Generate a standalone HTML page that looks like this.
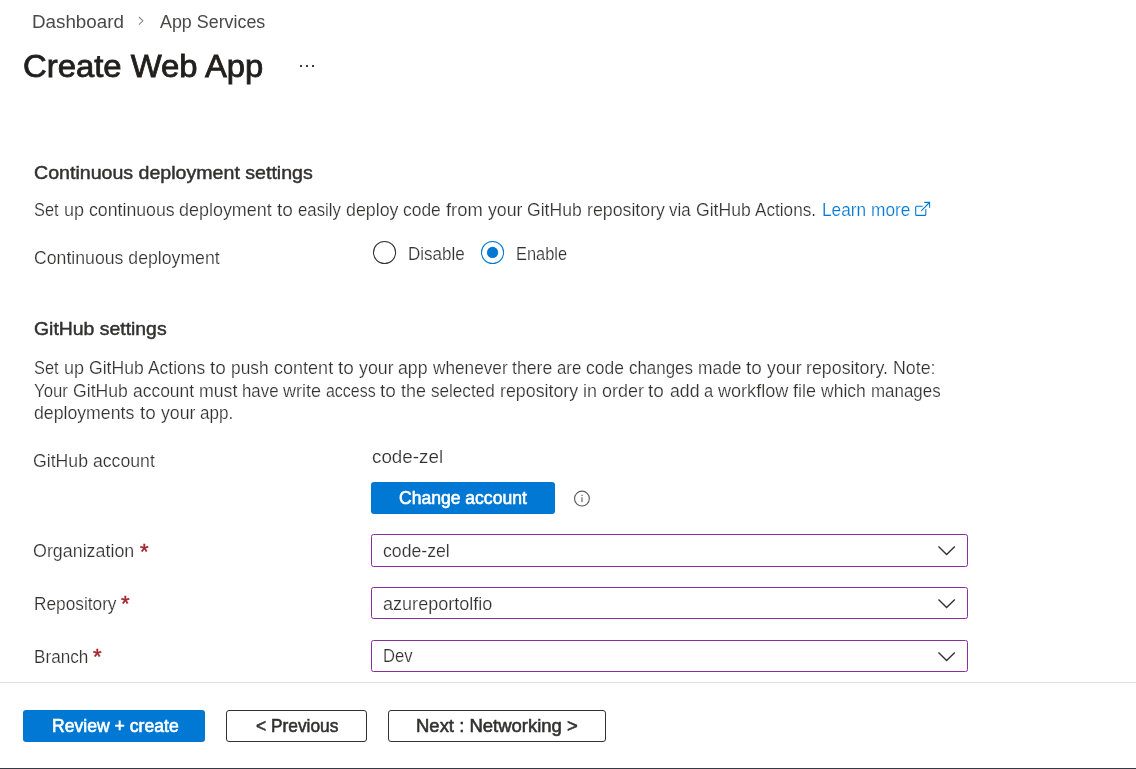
<!DOCTYPE html>
<html lang="en">
<head>
<meta charset="utf-8">
<title>Create Web App</title>
<style>
html,body{margin:0;padding:0;background:#fff;}
body{width:1136px;height:769px;position:relative;overflow:hidden;}
#page{position:absolute;left:0;top:0;width:1136px;height:769px;overflow:hidden;will-change:transform;font-family:"Liberation Sans",sans-serif;}
.t{position:absolute;white-space:nowrap;line-height:24px;height:24px;transform-origin:0 50%;}
.abs{position:absolute;box-sizing:border-box;}
.btn-p{background:#0078d4;border-radius:3px;}
.btn-s{background:#fff;border:1px solid #323130;border-radius:3px;}
.dd{left:371px;width:597px;border:1px solid #8a2da5;border-radius:2.5px;background:#fff;}
.radio{border-radius:50%;}
svg{position:absolute;overflow:visible;}
</style>
</head>
<body>
<div id="page">
<!-- breadcrumb chevron -->
<svg style="left:136px;top:14px" width="12" height="14" viewBox="0 0 12 14"><polyline points="3.0,3.0 6.9,6.8 3.0,10.6" fill="none" stroke="#8a8886" stroke-width="1.05"/></svg>
<!-- ellipsis -->
<div class="abs" style="left:300px;top:65px;width:2px;height:2px;background:#3b3a39"></div>
<div class="abs" style="left:306px;top:65px;width:2px;height:2px;background:#3b3a39"></div>
<div class="abs" style="left:312px;top:65px;width:2px;height:2px;background:#3b3a39"></div>

<!-- radios -->
<svg style="left:370px;top:238px" width="140" height="30" viewBox="0 0 140 30">
<circle cx="14.55" cy="14.45" r="11.05" fill="#fff" stroke="#323130" stroke-width="1.05"/>
<circle cx="122.55" cy="14.45" r="11.05" fill="#fff" stroke="#0078d4" stroke-width="1.05"/>
<circle cx="122.55" cy="14.45" r="5.6" fill="#0078d4"/>
</svg>

<!-- external link icon -->
<svg style="left:914px;top:201px" width="18" height="16" viewBox="0 0 18 16">
<path d="M8.8 5.3H2.7Q1.7 5.3 1.7 6.3V13.4Q1.7 14.4 2.7 14.4H10.8Q11.8 14.4 11.8 13.4V8.2" fill="none" stroke="#0078d4" stroke-width="1.1"/>
<path d="M7.2 9.8L15.5 1.5M10.2 1.4H15.6V6.8" fill="none" stroke="#0078d4" stroke-width="1.1"/>
</svg>

<!-- change account button -->
<div class="abs btn-p" style="left:371px;top:482px;width:184px;height:32px;"></div>
<!-- info icon -->
<svg style="left:573px;top:490px" width="18" height="18" viewBox="0 0 18 18">
<circle cx="8.95" cy="8.55" r="7.4" fill="none" stroke="#605e5c" stroke-width="1.15"/>
<rect x="8.45" y="7.2" width="1.1" height="4.9" fill="#605e5c"/>
<rect x="8.45" y="4.7" width="1.1" height="1.3" fill="#605e5c"/>
</svg>

<!-- dropdowns -->
<div class="abs dd" style="top:534px;height:33px"></div>
<div class="abs dd" style="top:587px;height:32px"></div>
<div class="abs dd" style="top:640px;height:32px"></div>
<svg style="left:936px;top:543px" width="22" height="14" viewBox="0 0 22 14"><polyline points="2.5,3.4 10.6,11.5 18.8,3.4" fill="none" stroke="#323130" stroke-width="1.35"/></svg>
<svg style="left:936px;top:595.6px" width="22" height="14" viewBox="0 0 22 14"><polyline points="2.5,3.4 10.6,11.5 18.8,3.4" fill="none" stroke="#323130" stroke-width="1.35"/></svg>
<svg style="left:936px;top:648.6px" width="22" height="14" viewBox="0 0 22 14"><polyline points="2.5,3.4 10.6,11.5 18.8,3.4" fill="none" stroke="#323130" stroke-width="1.35"/></svg>

<!-- footer -->
<div class="abs" style="left:0;top:682px;width:1136px;height:1px;background:#e1dfdd"></div>
<div class="abs btn-p" style="left:23px;top:710px;width:182px;height:32px;"></div>
<div class="abs btn-s" style="left:226px;top:710px;width:141px;height:32px;"></div>
<div class="abs btn-s" style="left:388px;top:710px;width:218px;height:32px;"></div>
<div class="abs" style="left:0;top:768px;width:1136px;height:1px;background:#353943"></div>

<span class="t" style="left:31.69px;top:9.52px;font-size:18.7px;font-weight:400;color:#4a4948;transform:scaleX(1.0053);">Dashboard</span>
<span class="t" style="left:160.43px;top:9.52px;font-size:18.7px;font-weight:400;color:#4a4948;transform:scaleX(0.9565);">App Services</span>
<span class="t" style="left:22.85px;top:54.00px;font-size:30.6px;font-weight:400;color:#201f1e;transform:scaleX(1.0735);-webkit-text-stroke:0.8px #201f1e;">Create Web App</span>
<span class="t" style="left:34.35px;top:160.58px;font-size:17.8px;font-weight:400;color:#323130;transform:scaleX(1.1018);-webkit-text-stroke:0.45px #323130;">Continuous deployment settings</span>
<span class="t" style="left:821.96px;top:198.12px;font-size:17.7px;font-weight:400;color:#0078d4;transform:scaleX(0.9769);-webkit-text-stroke:0.2px #fff;">Learn more</span>
<span class="t" style="left:34.34px;top:245.87px;font-size:17.7px;font-weight:400;color:#323130;transform:scaleX(0.9991);-webkit-text-stroke:0.2px #fff;">Continuous deployment</span>
<span class="t" style="left:408.25px;top:241.62px;font-size:17.7px;font-weight:400;color:#323130;transform:scaleX(0.9628);-webkit-text-stroke:0.2px #fff;">Disable</span>
<span class="t" style="left:515.72px;top:241.62px;font-size:17.7px;font-weight:400;color:#323130;transform:scaleX(0.9281);-webkit-text-stroke:0.2px #fff;">Enable</span>
<span class="t" style="left:34.48px;top:317.13px;font-size:17.8px;font-weight:400;color:#323130;transform:scaleX(1.0908);-webkit-text-stroke:0.45px #323130;">GitHub settings</span>
<span class="t" style="left:33.33px;top:449.37px;font-size:17.7px;font-weight:400;color:#323130;transform:scaleX(0.9993);-webkit-text-stroke:0.2px #fff;">GitHub account</span>
<span class="t" style="left:372.18px;top:444.77px;font-size:18.7px;font-weight:400;color:#323130;transform:scaleX(1.0061);-webkit-text-stroke:0.2px #fff;">code-zel</span>
<span class="t" style="left:399.22px;top:485.62px;font-size:17.7px;font-weight:400;color:#ffffff;transform:scaleX(0.9920);-webkit-text-stroke:0.6px #ffffff;">Change account</span>
<span class="t" style="left:33.39px;top:539.27px;font-size:17.7px;font-weight:400;color:#323130;transform:scaleX(1.0096);-webkit-text-stroke:0.2px #fff;">Organization</span>
<span class="t" style="left:33.77px;top:591.97px;font-size:17.7px;font-weight:400;color:#323130;transform:scaleX(0.9759);-webkit-text-stroke:0.2px #fff;">Repository</span>
<span class="t" style="left:33.85px;top:644.67px;font-size:17.7px;font-weight:400;color:#323130;transform:scaleX(0.9691);-webkit-text-stroke:0.2px #fff;">Branch</span>
<span class="t" style="left:139.73px;top:539.71px;font-size:22.2px;font-weight:400;color:#a4262c;transform:scaleX(0.9970);-webkit-text-stroke:0.4px #a4262c;">*</span>
<span class="t" style="left:121.18px;top:592.41px;font-size:22.2px;font-weight:400;color:#a4262c;transform:scaleX(0.9970);-webkit-text-stroke:0.4px #a4262c;">*</span>
<span class="t" style="left:92.56px;top:645.11px;font-size:22.2px;font-weight:400;color:#a4262c;transform:scaleX(0.9970);-webkit-text-stroke:0.4px #a4262c;">*</span>
<span class="t" style="left:383.14px;top:539.07px;font-size:17.7px;font-weight:400;color:#323130;transform:scaleX(0.9989);-webkit-text-stroke:0.2px #fff;">code-zel</span>
<span class="t" style="left:382.98px;top:592.07px;font-size:17.7px;font-weight:400;color:#323130;transform:scaleX(1.0209);-webkit-text-stroke:0.2px #fff;">azureportolfio</span>
<span class="t" style="left:383.20px;top:644.07px;font-size:17.7px;font-weight:400;color:#323130;transform:scaleX(0.9417);-webkit-text-stroke:0.2px #fff;">Dev</span>
<span class="t" style="left:51.59px;top:713.57px;font-size:17.7px;font-weight:400;color:#ffffff;transform:scaleX(0.9954);-webkit-text-stroke:0.6px #ffffff;">Review + create</span>
<span class="t" style="left:256.44px;top:713.57px;font-size:17.7px;font-weight:400;color:#323130;transform:scaleX(0.9804);-webkit-text-stroke:0.55px #323130;">&lt; Previous</span>
<span class="t" style="left:416.32px;top:713.57px;font-size:17.7px;font-weight:400;color:#323130;transform:scaleX(1.0451);-webkit-text-stroke:0.55px #323130;">Next : Networking &gt;</span>
<div class="ln"><span class="t" style="left:34.00px;top:198.12px;font-size:17.7px;font-weight:400;color:#323130;transform:scaleX(0.9249);-webkit-text-stroke:0.2px #fff;">Set </span><span class="t" style="left:63.60px;top:198.12px;font-size:17.7px;font-weight:400;color:#323130;transform:scaleX(1.0168);-webkit-text-stroke:0.2px #fff;">up </span><span class="t" style="left:88.60px;top:198.12px;font-size:17.7px;font-weight:400;color:#323130;transform:scaleX(1.0015);-webkit-text-stroke:0.2px #fff;">continuous </span><span class="t" style="left:179.20px;top:198.12px;font-size:17.7px;font-weight:400;color:#323130;transform:scaleX(1.0144);-webkit-text-stroke:0.2px #fff;">deployment </span><span class="t" style="left:276.94px;top:198.12px;font-size:17.7px;font-weight:400;color:#323130;transform:scaleX(1.0775);-webkit-text-stroke:0.2px #fff;">to </span><span class="t" style="left:298.13px;top:198.12px;font-size:17.7px;font-weight:400;color:#323130;transform:scaleX(0.9480);-webkit-text-stroke:0.2px #fff;">easily </span><span class="t" style="left:345.66px;top:198.12px;font-size:17.7px;font-weight:400;color:#323130;transform:scaleX(1.0071);-webkit-text-stroke:0.2px #fff;">deploy </span><span class="t" style="left:403.10px;top:198.12px;font-size:17.7px;font-weight:400;color:#323130;transform:scaleX(0.9845);-webkit-text-stroke:0.2px #fff;">code </span><span class="t" style="left:445.70px;top:198.12px;font-size:17.7px;font-weight:400;color:#323130;transform:scaleX(1.0375);-webkit-text-stroke:0.2px #fff;">from </span><span class="t" style="left:487.50px;top:198.12px;font-size:17.7px;font-weight:400;color:#323130;transform:scaleX(1.0020);-webkit-text-stroke:0.2px #fff;">your </span><span class="t" style="left:526.90px;top:198.12px;font-size:17.7px;font-weight:400;color:#323130;transform:scaleX(0.9939);-webkit-text-stroke:0.2px #fff;">GitHub </span><span class="t" style="left:586.50px;top:198.12px;font-size:17.7px;font-weight:400;color:#323130;transform:scaleX(1.0040);-webkit-text-stroke:0.2px #fff;">repository </span><span class="t" style="left:669.40px;top:198.12px;font-size:17.7px;font-weight:400;color:#323130;transform:scaleX(0.9555);-webkit-text-stroke:0.2px #fff;">via </span><span class="t" style="left:695.70px;top:198.12px;font-size:17.7px;font-weight:400;color:#323130;transform:scaleX(0.9939);-webkit-text-stroke:0.2px #fff;">GitHub </span><span class="t" style="left:755.30px;top:198.12px;font-size:17.7px;font-weight:400;color:#323130;transform:scaleX(0.9696);-webkit-text-stroke:0.2px #fff;">Actions.</span></div>
<div class="ln"><span class="t" style="left:34.00px;top:356.07px;font-size:17.7px;font-weight:400;color:#323130;transform:scaleX(0.9249);-webkit-text-stroke:0.2px #fff;">Set </span><span class="t" style="left:63.60px;top:356.07px;font-size:17.7px;font-weight:400;color:#323130;transform:scaleX(1.0168);-webkit-text-stroke:0.2px #fff;">up </span><span class="t" style="left:88.60px;top:356.07px;font-size:17.7px;font-weight:400;color:#323130;transform:scaleX(0.9939);-webkit-text-stroke:0.2px #fff;">GitHub </span><span class="t" style="left:148.20px;top:356.07px;font-size:17.7px;font-weight:400;color:#323130;transform:scaleX(0.9843);-webkit-text-stroke:0.2px #fff;">Actions </span><span class="t" style="left:210.13px;top:356.07px;font-size:17.7px;font-weight:400;color:#323130;transform:scaleX(1.0704);-webkit-text-stroke:0.2px #fff;">to </span><span class="t" style="left:231.18px;top:356.07px;font-size:17.7px;font-weight:400;color:#323130;transform:scaleX(0.9799);-webkit-text-stroke:0.2px #fff;">push </span><span class="t" style="left:273.58px;top:356.07px;font-size:17.7px;font-weight:400;color:#323130;transform:scaleX(1.0193);-webkit-text-stroke:0.2px #fff;">content </span><span class="t" style="left:337.73px;top:356.07px;font-size:17.7px;font-weight:400;color:#323130;transform:scaleX(1.0709);-webkit-text-stroke:0.2px #fff;">to </span><span class="t" style="left:358.79px;top:356.07px;font-size:17.7px;font-weight:400;color:#323130;transform:scaleX(1.0043);-webkit-text-stroke:0.2px #fff;">your </span><span class="t" style="left:398.28px;top:356.07px;font-size:17.7px;font-weight:400;color:#323130;transform:scaleX(0.9987);-webkit-text-stroke:0.2px #fff;">app </span><span class="t" style="left:432.66px;top:356.07px;font-size:17.7px;font-weight:400;color:#323130;transform:scaleX(0.9730);-webkit-text-stroke:0.2px #fff;">whenever </span><span class="t" style="left:512.06px;top:356.07px;font-size:17.7px;font-weight:400;color:#323130;transform:scaleX(0.9974);-webkit-text-stroke:0.2px #fff;">there </span><span class="t" style="left:557.17px;top:356.07px;font-size:17.7px;font-weight:400;color:#323130;transform:scaleX(0.9505);-webkit-text-stroke:0.2px #fff;">are </span><span class="t" style="left:586.14px;top:356.07px;font-size:17.7px;font-weight:400;color:#323130;transform:scaleX(0.9869);-webkit-text-stroke:0.2px #fff;">code </span><span class="t" style="left:628.84px;top:356.07px;font-size:17.7px;font-weight:400;color:#323130;transform:scaleX(0.9566);-webkit-text-stroke:0.2px #fff;">changes </span><span class="t" style="left:697.51px;top:356.07px;font-size:17.7px;font-weight:400;color:#323130;transform:scaleX(0.9827);-webkit-text-stroke:0.2px #fff;">made </span><span class="t" style="left:745.82px;top:356.07px;font-size:17.7px;font-weight:400;color:#323130;transform:scaleX(1.0704);-webkit-text-stroke:0.2px #fff;">to </span><span class="t" style="left:766.87px;top:356.07px;font-size:17.7px;font-weight:400;color:#323130;transform:scaleX(1.0045);-webkit-text-stroke:0.2px #fff;">your </span><span class="t" style="left:806.37px;top:356.07px;font-size:17.7px;font-weight:400;color:#323130;transform:scaleX(1.0085);-webkit-text-stroke:0.2px #fff;">repository. </span><span class="t" style="left:893.28px;top:356.07px;font-size:17.7px;font-weight:400;color:#323130;transform:scaleX(1.0059);-webkit-text-stroke:0.2px #fff;">Note:</span></div>
<div class="ln"><span class="t" style="left:34.00px;top:378.57px;font-size:17.7px;font-weight:400;color:#323130;transform:scaleX(0.9471);-webkit-text-stroke:0.2px #fff;">Your </span><span class="t" style="left:73.00px;top:378.57px;font-size:17.7px;font-weight:400;color:#323130;transform:scaleX(0.9968);-webkit-text-stroke:0.2px #fff;">GitHub </span><span class="t" style="left:132.77px;top:378.57px;font-size:17.7px;font-weight:400;color:#323130;transform:scaleX(0.9868);-webkit-text-stroke:0.2px #fff;">account </span><span class="t" style="left:198.75px;top:378.57px;font-size:17.7px;font-weight:400;color:#323130;transform:scaleX(1.0018);-webkit-text-stroke:0.2px #fff;">must </span><span class="t" style="left:242.07px;top:378.57px;font-size:17.7px;font-weight:400;color:#323130;transform:scaleX(0.9524);-webkit-text-stroke:0.2px #fff;">have </span><span class="t" style="left:283.28px;top:378.57px;font-size:17.7px;font-weight:400;color:#323130;transform:scaleX(1.0157);-webkit-text-stroke:0.2px #fff;">write </span><span class="t" style="left:326.20px;top:378.57px;font-size:17.7px;font-weight:400;color:#323130;transform:scaleX(0.9014);-webkit-text-stroke:0.2px #fff;">access </span><span class="t" style="left:380.25px;top:378.57px;font-size:17.7px;font-weight:400;color:#323130;transform:scaleX(1.0709);-webkit-text-stroke:0.2px #fff;">to </span><span class="t" style="left:401.31px;top:378.57px;font-size:17.7px;font-weight:400;color:#323130;transform:scaleX(1.0128);-webkit-text-stroke:0.2px #fff;">the </span><span class="t" style="left:431.19px;top:378.57px;font-size:17.7px;font-weight:400;color:#323130;transform:scaleX(0.9661);-webkit-text-stroke:0.2px #fff;">selected </span><span class="t" style="left:499.58px;top:378.57px;font-size:17.7px;font-weight:400;color:#323130;transform:scaleX(1.0067);-webkit-text-stroke:0.2px #fff;">repository </span><span class="t" style="left:582.71px;top:378.57px;font-size:17.7px;font-weight:400;color:#323130;transform:scaleX(1.0144);-webkit-text-stroke:0.2px #fff;">in </span><span class="t" style="left:601.66px;top:378.57px;font-size:17.7px;font-weight:400;color:#323130;transform:scaleX(1.0135);-webkit-text-stroke:0.2px #fff;">order </span><span class="t" style="left:648.49px;top:378.57px;font-size:17.7px;font-weight:400;color:#323130;transform:scaleX(1.0709);-webkit-text-stroke:0.2px #fff;">to </span><span class="t" style="left:669.55px;top:378.57px;font-size:17.7px;font-weight:400;color:#323130;transform:scaleX(0.9990);-webkit-text-stroke:0.2px #fff;">add </span><span class="t" style="left:703.94px;top:378.57px;font-size:17.7px;font-weight:400;color:#323130;transform:scaleX(0.9315);-webkit-text-stroke:0.2px #fff;">a </span><span class="t" style="left:717.68px;top:378.57px;font-size:17.7px;font-weight:400;color:#323130;transform:scaleX(1.0217);-webkit-text-stroke:0.2px #fff;">workflow </span><span class="t" style="left:792.99px;top:378.57px;font-size:17.7px;font-weight:400;color:#323130;transform:scaleX(1.0166);-webkit-text-stroke:0.2px #fff;">file </span><span class="t" style="left:820.97px;top:378.57px;font-size:17.7px;font-weight:400;color:#323130;transform:scaleX(0.9899);-webkit-text-stroke:0.2px #fff;">which </span><span class="t" style="left:870.60px;top:378.57px;font-size:17.7px;font-weight:400;color:#323130;transform:scaleX(0.9566);-webkit-text-stroke:0.2px #fff;">manages</span></div>
<div class="ln"><span class="t" style="left:34.00px;top:400.97px;font-size:17.7px;font-weight:400;color:#323130;transform:scaleX(1.0000);-webkit-text-stroke:0.2px #fff;">deployments </span><span class="t" style="left:139.70px;top:400.97px;font-size:17.7px;font-weight:400;color:#323130;transform:scaleX(1.0679);-webkit-text-stroke:0.2px #fff;">to </span><span class="t" style="left:160.70px;top:400.97px;font-size:17.7px;font-weight:400;color:#323130;transform:scaleX(1.0020);-webkit-text-stroke:0.2px #fff;">your </span><span class="t" style="left:200.10px;top:400.97px;font-size:17.7px;font-weight:400;color:#323130;transform:scaleX(0.9646);-webkit-text-stroke:0.2px #fff;">app.</span></div>
</div>
</body>
</html>
